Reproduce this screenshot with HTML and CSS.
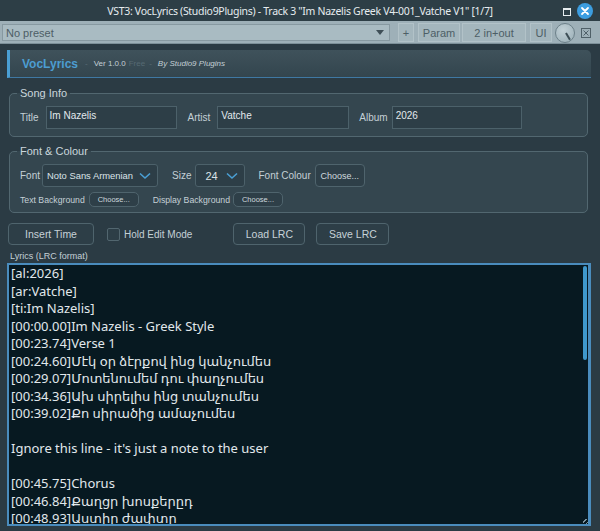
FILE: index.html
```html
<!DOCTYPE html>
<html lang="en">
<head>
    <meta charset="UTF-8">
    <title>VocLyrics</title>
    <link rel="stylesheet" href="styles.css">
</head>
<body>

<div class="titlebar">
    <span class="title-text">VST3: VocLyrics (Studio9Plugins) - Track 3 "Im Nazelis Greek V4-001_Vatche V1" [1/7]</span>
    <span class="win-max"></span>
    <span class="win-close">
        <svg width="16" height="16" viewBox="0 0 16 16"><path d="M5 5 L11 11 M11 5 L5 11" stroke="#fff" stroke-width="1.8" stroke-linecap="round"/></svg>
    </span>
</div>

<div class="toolbar">
    <div class="preset">
        <span>No preset</span>
        <svg class="preset-arrow" width="8" height="6" viewBox="0 0 8 6"><path d="M0 0 L8 0 L4 5 Z" fill="#3f4f57"/></svg>
    </div>
    <div class="tb-btn tb-plus">+</div>
    <div class="tb-btn tb-param">Param</div>
    <div class="tb-btn tb-io">2 in+out</div>
    <div class="tb-btn tb-ui">UI</div>
    <div class="knob"><span class="knob-line"></span></div>
    <div class="bypass">
        <svg width="10" height="10" viewBox="0 0 10 10"><rect x="0.5" y="0.5" width="9" height="9" fill="none" stroke="#4f6068"/><path d="M2.5 2.5 L7.5 7.5 M7.5 2.5 L2.5 7.5" stroke="#4f6068"/></svg>
    </div>
</div>

<div class="plugin">
    <div class="header">
        <span class="brand">VocLyrics</span>
        <span class="sep">-</span>
        <span class="ver">Ver 1.0.0</span>
        <span class="free">Free</span>
        <span class="sep">-</span>
        <span class="by">By Studio9 Plugins</span>
    </div>

    <fieldset class="group song">
        <legend>Song Info</legend>
        <div class="row">
            <label class="lbl">Title</label>
            <div class="field f-title">Im Nazelis</div>
            <label class="lbl l-artist">Artist</label>
            <div class="field f-artist">Vatche</div>
            <label class="lbl l-album">Album</label>
            <div class="field f-album">2026</div>
        </div>
    </fieldset>

    <fieldset class="group fonts">
        <legend>Font &amp; Colour</legend>
        <div class="row">
            <label class="lbl">Font</label>
            <div class="combo c-font">
                <span>Noto Sans Armenian</span>
                <svg width="12" height="8" viewBox="0 0 12 8"><path d="M1 1.5 L6 6 L11 1.5" fill="none" stroke="#4a9fd4" stroke-width="1.6"/></svg>
            </div>
            <label class="lbl l-size">Size</label>
            <div class="combo c-size">
                <span>24</span>
                <svg width="12" height="8" viewBox="0 0 12 8"><path d="M1 1.5 L6 6 L11 1.5" fill="none" stroke="#4a9fd4" stroke-width="1.6"/></svg>
            </div>
            <label class="lbl l-fc">Font Colour</label>
            <div class="btn btn-choose">Choose...</div>
        </div>
        <div class="row row2">
            <label class="lbl small">Text Background</label>
            <div class="btn btn-small b-tb">Choose...</div>
            <label class="lbl small l-db">Display Background</label>
            <div class="btn btn-small b-db">Choose...</div>
        </div>
    </fieldset>

    <div class="actions">
        <div class="btn btn-act b-insert">Insert Time</div>
        <span class="checkbox"></span>
        <span class="check-label">Hold Edit Mode</span>
        <div class="btn btn-act b-load">Load LRC</div>
        <div class="btn btn-act b-save">Save LRC</div>
    </div>

    <div class="lyrics-label">Lyrics (LRC format)</div>
    <div class="lyrics">
<pre class="lyrics-text">[al:2026]
[ar:Vatche]
[ti:Im Nazelis]
[00:00.00]Im Nazelis - Greek Style
[00:23.74]Verse 1
[00:24.60]Մէկ օր ձէրքով ինց կանչումես
[00:29.07]Մոտենումեմ դու փաղչումես
[00:34.36]Ախ սիրելիս ինց տանչումես
[00:39.02]Քո սիրածից ամաչումես

Ignore this line - it's just a note to the user

[00:45.75]Chorus
[00:46.84]Քաղցր խոսքերըդ
[00:48.93]Աստիր ժափտր</pre>
        <span class="scrollbar"></span>
        <span class="grip"></span>
    </div>
</div>

</body>
</html>
```

FILE: styles.css
```css
body {
    margin: 0;
    width: 600px;
    height: 531px;
    overflow: hidden;
    background: #2b3b44;
    font-family: "Liberation Sans", Arial, sans-serif;
}

/* window title */
.titlebar {
    height: 21px;
    background: #2d3e46;
    position: relative;
    display: flex;
    align-items: center;
    justify-content: center;
}
.title-text {
    font-family: "Noto Sans", sans-serif;
    font-size: 10.5px;
    color: #e6ecef;
    letter-spacing: -0.3px;
}
.win-max {
    position: absolute;
    left: 563px;
    top: 8px;
    width: 6px;
    height: 5px;
    border: 1px solid #e6ecef;
    border-top-width: 2px;
}
.win-close {
    position: absolute;
    left: 577px;
    top: 3px;
    width: 16px;
    height: 16px;
    border-radius: 50%;
    background: #3c9de0;
}
.win-close svg {
    display: block;
}

/* host toolbar */
.toolbar {
    height: 23px;
    background: #9eb0b8;
    display: flex;
    align-items: center;
    font-size: 11px;
    color: #4d5e66;
    box-shadow: inset 0 -1px 0 #7d9099;
}
.preset {
    width: 388px;
    height: 17px;
    margin-left: 2px;
    background: #a9bbc2;
    border: 1px solid #8799a1;
    display: flex;
    align-items: center;
    padding-left: 3px;
    box-sizing: border-box;
}
.preset span {
    flex: 1;
}
.preset-arrow {
    margin-right: 5px;
}
.tb-btn {
    height: 19px;
    display: flex;
    align-items: center;
    justify-content: center;
    background: #a4b6bd;
    border: 1px solid #b2c2c8;
    box-sizing: border-box;
    margin-left: 4px;
}
.tb-plus { width: 16px; margin-left: 8px; }
.tb-param { width: 42px; }
.tb-io { width: 64px; margin-left: 2px; }
.tb-ui { width: 22px; margin-left: 4px; }
.knob {
    width: 20px;
    height: 20px;
    margin-left: 3px;
    border-radius: 50%;
    border: 1px solid #6c8089;
    background: radial-gradient(circle at 40% 35%, #c2d1d7, #9aaeb6);
    position: relative;
    box-sizing: border-box;
}
.knob-line {
    position: absolute;
    left: 9px;
    top: 9px;
    width: 1.5px;
    height: 8px;
    background: #3d4e56;
    transform-origin: top center;
    transform: rotate(-30deg);
}
.bypass {
    margin-left: 6px;
    display: flex;
}

/* plugin body */
.plugin {
    padding: 6px 9px 0 7px;
    color: #c9d5db;
    white-space: nowrap;
}
.header {
    height: 27px;
    border-left: 3px solid #4a9fd4;
    border-bottom: 1px solid #3f78a3;
    border-top-right-radius: 5px;
    background: linear-gradient(#3f525b, #33454e);
    display: flex;
    align-items: center;
    padding-left: 12px;
    font-size: 8px;
}
.brand {
    font-size: 12px;
    font-weight: bold;
    color: #4c9dd1;
    margin-right: 7px;
}
.sep {
    color: #5a6d76;
    margin-right: 6px;
}
.ver {
    color: #c3cfd5;
    margin-right: 3px;
}
.free {
    color: #566a73;
    margin-right: 4px;
}
.by {
    font-style: italic;
    color: #c3cfd5;
}

.group {
    margin: 9px 0 0 2px;
    padding: 7px 10px 7px 10px;
    border: 1px solid #526770;
    border-radius: 5px;
    background: #34464f;
    width: 579px;
    box-sizing: border-box;
}
.group legend {
    font-size: 11px;
    color: #cad6dc;
    padding: 0 3px;
    margin-left: -3px;
}
.row {
    display: flex;
    align-items: center;
}
.lbl {
    font-size: 10px;
    color: #c4d0d6;
}
.field {
    height: 23px;
    background: #2d3e47;
    border: 1px solid #4c616a;
    box-sizing: border-box;
    font-size: 10px;
    color: #e2e9ed;
    padding: 3px 0 0 3px;
}
.f-title { width: 131px; margin-left: 7px; }
.l-artist { margin-left: 11px; }
.f-artist { width: 132px; margin-left: 7px; }
.l-album { margin-left: 10px; }
.f-album { width: 130px; margin-left: 4px; }

.fonts {
    margin-top: 8px;
    padding-top: 7px;
    padding-bottom: 5px;
}
.combo {
    height: 23px;
    background: #2d3e47;
    border: 1px solid #4c616a;
    border-radius: 3px;
    box-sizing: border-box;
    display: flex;
    align-items: center;
    justify-content: space-between;
    padding: 0 6px 0 4px;
    font-size: 10px;
    color: #dbe3e7;
}
.c-font { width: 116px; margin-left: 2px; font-size: 9.4px; }
.l-size { margin-left: 14px; }
.c-size { width: 50px; margin-left: 4px; padding-left: 9px; font-size: 11px; }
.l-fc { margin-left: 13px; }
.btn {
    background: #2e3f48;
    border: 1px solid #4f646d;
    border-radius: 4px;
    box-sizing: border-box;
    display: flex;
    align-items: center;
    justify-content: center;
    color: #cfd9de;
}
.btn-choose {
    width: 50px;
    height: 23px;
    margin-left: 4px;
    font-size: 9px;
}
.row2 {
    margin-top: 5px;
}
.lbl.small {
    font-size: 8.7px;
}
.btn-small {
    width: 50px;
    height: 15px;
    font-size: 7.5px;
    border-radius: 5px;
}
.b-tb { margin-left: 4px; }
.l-db { margin-left: 14px; }
.b-db { margin-left: 3px; }

.actions {
    display: flex;
    align-items: center;
    margin-top: 10px;
    margin-left: 1px;
    height: 22px;
}
.btn-act {
    height: 22px;
    font-size: 10.5px;
    color: #c7d2d8;
    background: #2d3e47;
}
.b-insert { width: 86px; }
.checkbox {
    width: 11px;
    height: 11px;
    border: 1px solid #52666f;
    border-radius: 2px;
    background: #2d3e47;
    margin-left: 13px;
}
.check-label {
    font-size: 10px;
    color: #c4d0d6;
    margin-left: 4px;
}
.b-load { width: 72px; margin-left: 41px; }
.b-save { width: 73px; margin-left: 11px; }

.lyrics-label {
    font-size: 9px;
    color: #c4d0d6;
    margin: 6px 0 0 3px;
    height: 12px;
}
.lyrics {
    height: 263px;
    border: 2px solid #4a8cbd;
    border-right-width: 3px;
    background: #071921;
    position: relative;
    box-sizing: border-box;
    overflow: hidden;
}
.lyrics-text {
    margin: 0;
    padding: 0 0 0 2px;
    font-family: "Noto Sans", "DejaVu Sans", sans-serif;
    font-size: 13px;
    line-height: 17.5px;
    color: #e1e8ec;
    white-space: pre;
}
.scrollbar {
    position: absolute;
    right: 1px;
    top: 1px;
    width: 4px;
    height: 94px;
    border-radius: 2px;
    background: #3f98cc;
}
.grip {
    position: absolute;
    right: -3px;
    bottom: -3px;
    width: 8px;
    height: 8px;
    background: repeating-linear-gradient(135deg, transparent 0 2px, #7c93a0 2px 3px);
}
```
